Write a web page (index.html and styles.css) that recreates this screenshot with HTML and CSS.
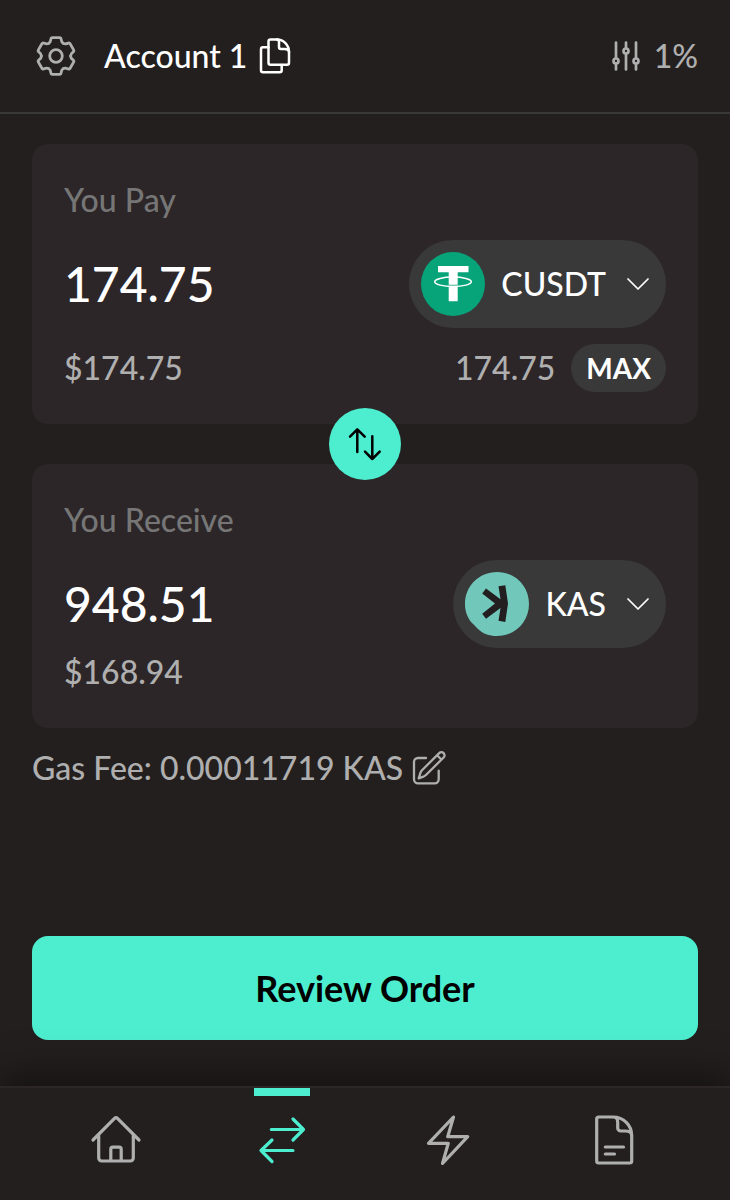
FILE: index.html
```html
<!DOCTYPE html>
<html lang="en">
<head>
<meta charset="utf-8">
<meta name="viewport" content="width=device-width, initial-scale=1">
<title>Swap</title>
<link rel="stylesheet" href="styles.css">
</head>
<body>
<div class="app">
  <header class="header">
    <button class="icon-button" type="button" aria-label="Settings">
      <svg class="icon-gear" viewBox="-24 -24 48 48">
        <defs>
          <path id="tooth" d="M-7.300 -12.650C-5.800 -13.500 -5.400 -14.500 -5.200 -16.300Q-5 -18.300 -3.500 -18.300H3.500Q5 -18.300 5.200 -16.300C5.400 -14.500 5.800 -13.500 7.300 -12.650"/>
        </defs>
        <use href="#tooth"/>
        <use href="#tooth" transform="rotate(60)"/>
        <use href="#tooth" transform="rotate(120)"/>
        <use href="#tooth" transform="rotate(180)"/>
        <use href="#tooth" transform="rotate(240)"/>
        <use href="#tooth" transform="rotate(300)"/>
        <circle r="6.300"/>
      </svg>
    </button>
    <button class="account" type="button">
      <span>Account 1</span>
      <svg class="icon-copy" viewBox="0 0 40 40">
        <path d="M15.500 3.400H22C28.500 3.400 34 9 34 16V26.700a2 2 0 0 1-2 2H15.500a2 2 0 0 1-2-2V5.400a2 2 0 0 1 2-2Z"/>
        <path d="M22 3.400c1.600 0 2 1.500 2 3V11a2 2 0 0 0 2 2h3.500c2.500 0 4.500 1 4.500 3"/>
        <path d="M13.500 11.300H8a2 2 0 0 0-2 2V34.300a2 2 0 0 0 2 2H24.700a2 2 0 0 0 2-2V29"/>
      </svg>
    </button>
    <button class="slippage" type="button">
      <svg class="icon-sliders" viewBox="0 0 32 32">
        <path d="M6 2.500V18M6 24V29.500M16 2.500V8M16 14V29.500M26 2.500V18M26 24V29.500"/>
        <circle cx="6" cy="21" r="2.500"/>
        <circle cx="16" cy="11" r="2.500"/>
        <circle cx="26" cy="21" r="2.500"/>
      </svg>
      <span>1%</span>
    </button>
  </header>

  <main class="main">
    <section class="card">
      <label class="card-label" for="pay">You Pay</label>
      <div class="row token-row">
        <input class="amount" id="pay" type="text" inputmode="decimal" value="174.75">
        <button class="token" type="button">
          <svg class="token-logo" viewBox="0 0 64 64">
            <circle cx="32" cy="32" r="32" fill="#07a47a"/>
            <path fill="#fff" d="M17 14H47.500V20.300H36.700V49.200H27.700V20.300H17Z"/>
            <path d="M25 33.100Q32 33.600 39 33.100" fill="none" stroke="#07a47a" stroke-width="1"/>
            <ellipse cx="32" cy="29.800" rx="18.300" ry="4.700" fill="none" stroke="#fff" stroke-width="1.500"/>
          </svg>
          <span>CUSDT</span>
          <svg class="icon-chevron" viewBox="0 0 24 24"><path d="M2 7 12 17 22 7"/></svg>
        </button>
      </div>
      <div class="row detail-row">
        <span class="fiat">$174.75</span>
        <span class="balance">174.75</span>
        <button class="max" type="button">MAX</button>
      </div>
    </section>

    <div class="switch">
      <button class="switch-button" type="button" aria-label="Switch tokens">
        <svg class="icon-switch" viewBox="0 0 40 40">
          <path d="M12.300 28V5.500M5 12.700 12.300 5.300 19.700 12.700M27.300 12.300V35M20 27.700 27.300 35 34.700 27.700"/>
        </svg>
      </button>
    </div>

    <section class="card">
      <label class="card-label" for="receive">You Receive</label>
      <div class="row token-row">
        <input class="amount" id="receive" type="text" inputmode="decimal" value="948.51">
        <button class="token" type="button">
          <svg class="token-logo" viewBox="0 0 64 64">
            <path fill="#70c7ba" d="M32 0C50 0 64 14 64 32S50 64 32 64C24 64 17.500 61.500 13 57C11.500 55.500 9 52.500 6.500 50.500C2 45 0 39 0 32C0 14 14 0 32 0Z"/>
            <path fill="#231f20" d="M33.500 14.200 40.300 13.300 43 31.600 40.300 50 33.500 48.800 35.500 36 21 46.800 17.200 41.800 30 31.600 17.200 21.500 21 16.500 35.500 27.300Z"/>
          </svg>
          <span>KAS</span>
          <svg class="icon-chevron" viewBox="0 0 24 24"><path d="M2 7 12 17 22 7"/></svg>
        </button>
      </div>
      <div class="fiat">$168.94</div>
    </section>

    <div class="fee">
      <span>Gas Fee: 0.00011719 KAS</span>
      <button class="icon-button" type="button" aria-label="Edit gas fee">
        <svg class="icon-edit" viewBox="0 0 40 40">
          <path d="M15 10H7a4 4 0 0 0-4 4V31.300a4 4 0 0 0 4 4H23.700a4 4 0 0 0 4-4V22.700"/>
          <path d="M7.700 30.300 9.500 24.700Q10 23.400 11 22.300L28.200 5.100a3 3 0 0 1 4.400 4.400L15.200 26.800Q14.200 27.800 13 28.300ZM26.300 7.500 30.300 11.500"/>
        </svg>
      </button>
    </div>

    <button class="review" type="button">Review Order</button>
  </main>

  <nav class="nav">
    <a class="nav-item" href="#home" aria-label="Home">
      <svg class="icon-nav" viewBox="0 0 56 56">
        <path d="M5 28 26.500 6.400Q28 5 29.500 6.400L51 28M10.700 23V46a3 3 0 0 0 3 3H42.300a3 3 0 0 0 3-3V23M22.800 49V37.200a2 2 0 0 1 2-2h6.400a2 2 0 0 1 2 2V49"/>
      </svg>
    </a>
    <a class="nav-item nav-item-active" href="#swap" aria-label="Swap" aria-current="page">
      <svg class="icon-nav" viewBox="0 0 56 56">
        <path d="M17.300 17.500H49.500M39 7 49.500 17.500 39 28M39 38.500H7M18 28 7 38.500 18 49.500"/>
      </svg>
    </a>
    <a class="nav-item" href="#activity" aria-label="Activity">
      <svg class="icon-nav" viewBox="0 0 56 56">
        <path d="M33.500 5 8.500 31.300H28.300L22.500 51.500 47.700 24.700H27.700Z"/>
      </svg>
    </a>
    <a class="nav-item" href="#history" aria-label="History">
      <svg class="icon-nav" viewBox="0 0 56 56">
        <path d="M12.700 5H27C37.500 5 45.700 13 45.700 23.500V49a2 2 0 0 1-2 2H12.700a2 2 0 0 1-2-2V7a2 2 0 0 1 2-2ZM27 5c3.500 0 4.700 2.500 4.700 5v6a3 3 0 0 0 3 3h4.500c3.500 0 6.500 1.500 6.500 4.500M19.300 35H37.500M19.300 42H28.500"/>
      </svg>
    </a>
  </nav>
</div>
</body>
</html>
```
FILE: styles.css
```css
* {
  box-sizing: border-box;
}

body {
  margin: 0;
  background: #231f1e;
  color: #ffffff;
  font-family: Lato, "Liberation Sans", sans-serif;
  font-size: 32px;
  font-weight: 500;
  line-height: 48px;
}

button,
input {
  margin: 0;
  padding: 0;
  border: 0;
  background: none;
  color: inherit;
  font: inherit;
}

button {
  cursor: pointer;
}

svg {
  display: block;
  flex: none;
  fill: none;
  stroke-linecap: round;
  stroke-linejoin: round;
}

.app {
  display: flex;
  flex-direction: column;
  min-height: 100vh;
}

.header {
  display: flex;
  align-items: center;
  gap: 24px;
  padding: 32px;
  border-bottom: 2px solid #393939;
}

.icon-button {
  color: #afafaf;
}

.icon-gear {
  width: 48px;
  height: 48px;
  stroke: currentColor;
  stroke-width: 2.8;
}

.account {
  display: flex;
  align-items: center;
  gap: 8px;
}

.icon-copy {
  width: 40px;
  height: 40px;
  stroke: currentColor;
  stroke-width: 2.5;
}

.slippage {
  display: flex;
  align-items: center;
  gap: 12px;
  margin-left: auto;
  color: #afafaf;
}

.icon-sliders {
  width: 32px;
  height: 32px;
  stroke: currentColor;
  stroke-width: 2.7;
}

.main {
  display: flex;
  flex: 1;
  flex-direction: column;
  padding: 30px 32px 46px;
}

.card {
  padding: 32px;
  border-radius: 16px;
  background: #2c2628;
}

.card-label {
  display: block;
  color: #767676;
}

.row {
  display: flex;
  align-items: center;
}

.token-row {
  gap: 16px;
  padding-top: 16px;
}

.amount {
  flex: 1;
  min-width: 0;
  height: 64px;
  font-size: 48px;
  line-height: 64px;
}

.token {
  display: flex;
  align-items: center;
  padding: 12px 16px 12px 12px;
  border-radius: 44px;
  background: #393939;
}

.token-logo {
  width: 64px;
  height: 64px;
  margin-right: 16px;
}

.icon-chevron {
  width: 24px;
  height: 24px;
  margin-left: 20px;
  stroke: currentColor;
  stroke-width: 1.7;
}

.detail-row {
  gap: 16px;
  padding-top: 16px;
}

.fiat,
.balance {
  color: #afafaf;
}

.balance {
  margin-left: auto;
}

.max {
  padding: 0 15px;
  border-radius: 24px;
  background: #393939;
  font-size: 28px;
  font-weight: 700;
}

.switch {
  display: flex;
  align-items: center;
  justify-content: center;
  height: 40px;
}

.switch-button {
  position: relative;
  display: flex;
  flex: none;
  align-items: center;
  justify-content: center;
  width: 72px;
  height: 72px;
  border-radius: 50%;
  background: #4dedcf;
  color: #000000;
}

.icon-switch {
  width: 40px;
  height: 40px;
  stroke: currentColor;
  stroke-width: 2.5;
}

.fee {
  display: flex;
  align-items: center;
  gap: 8px;
  padding-top: 16px;
  color: #afafaf;
}

.icon-edit {
  width: 40px;
  height: 40px;
  stroke: currentColor;
  stroke-width: 2.3;
}

.review {
  height: 104px;
  margin-top: auto;
  border-radius: 16px;
  background: #4dedcf;
  color: #000000;
  font-size: 36px;
  font-weight: 700;
}

.nav {
  display: flex;
  padding: 0 33px;
  border-top: 2px solid #2c2628;
  background: #231f1e;
  box-shadow: 0 -8px 40px rgba(0, 0, 0, 0.5);
}

.nav-item {
  position: relative;
  display: flex;
  flex: 1;
  justify-content: center;
  padding: 24px 0 32px;
  color: #afafaf;
}

.nav-item-active {
  color: #4dedcf;
}

.nav-item-active::before {
  content: "";
  position: absolute;
  top: 0;
  left: calc(50% - 28px);
  width: 56px;
  height: 8px;
  background: currentColor;
}

.icon-nav {
  width: 56px;
  height: 56px;
  stroke: currentColor;
  stroke-width: 3.2;
}
```
